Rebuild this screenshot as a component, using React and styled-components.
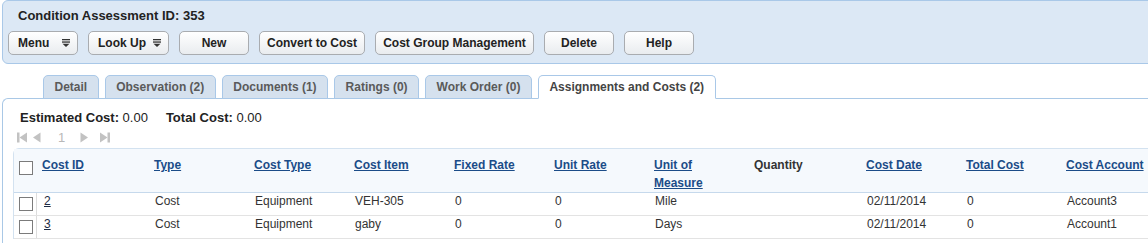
import styled, { createGlobalStyle } from "styled-components";

const GlobalStyle = createGlobalStyle`
  body {
    margin: 0;
    background: #ffffff;
    font-family: "Liberation Sans", Arial, sans-serif;
    font-size: 12px;
    color: #222;
    overflow: hidden;
  }
`;

const Page = styled.div`
  width: 1170px;
  padding-left: 2px;
`;

const Header = styled.div`
  background: #dce8f5;
  border: 1px solid #a9c8e8;
  border-radius: 6px;
  padding: 7px 0 8px 5px;
`;

const Title = styled.div`
  font-size: 13px;
  font-weight: bold;
  line-height: 16px;
  color: #222;
  padding-left: 10px;
  margin-bottom: 7px;
`;

const Toolbar = styled.div`
  display: flex;
  gap: 10px;
`;

const Button = styled.button`
  box-sizing: border-box;
  width: ${(p) => p.$w}px;
  height: 24px;
  padding: ${(p) => (p.$menu ? "0 7px 0 9px" : "0")};
  display: flex;
  align-items: center;
  gap: 6px;
  justify-content: ${(p) => (p.$menu ? "space-between" : "center")};
  background: linear-gradient(#ffffff, #e9ecef);
  border: 1px solid #a9acb0;
  border-radius: 5px;
  font-family: "Liberation Sans", Arial, sans-serif;
  font-size: 12px;
  font-weight: bold;
  color: #222;
`;

const TabBar = styled.div`
  display: flex;
  gap: 6px;
  margin: 11px 0 -1px 41px;
  position: relative;
`;

const Tab = styled.div`
  box-sizing: border-box;
  height: 24px;
  padding: 0 10.5px;
  display: flex;
  align-items: center;
  font-weight: bold;
  font-size: 12px;
  color: ${(p) => (p.$active ? "#444" : "#5a5a5a")};
  background: ${(p) => (p.$active ? "#ffffff" : "#d5e1ee")};
  border: 1px solid #a9c8e8;
  border-bottom-color: ${(p) => (p.$active ? "#ffffff" : "#a9c8e8")};
  border-radius: 5px 5px 0 0;
`;

const Panel = styled.div`
  border-top: 1px solid #a9c8e6;
  border-left: 1px solid #a9c8e6;
  border-top-left-radius: 6px;
  padding-top: 11px;
  height: 140px;
`;

const Summary = styled.div`
  display: flex;
  gap: 18px;
  padding-left: 17px;
  font-size: 13px;
  line-height: 15px;
  color: #222;
`;

const Label = styled.span`
  font-weight: bold;
`;

const Pager = styled.div`
  display: flex;
  align-items: center;
  height: 11px;
  margin: 7px 0 5px 14px;
`;

const PageNum = styled.span`
  font-size: 13px;
  color: #b8b8b8;
  margin: 0 15px 0 17px;
`;

const Grid = styled.div`
  margin-left: 10px;
  border-top: 1px solid #d3e2f0;
  border-left: 1px solid #d3e2f0;
  border-top-left-radius: 6px;
`;

const Row = styled.div`
  display: grid;
  grid-template-columns: 22px 112px 100px 100px 100px 100px 100px 100px 112px 100px 100px 1fr;
  background: ${(p) => (p.$head ? "#f5f9fd" : "#ffffff")};
  border-bottom: 1px solid ${(p) => (p.$head ? "#c6d9ec" : "#e3e3e3")};
  height: ${(p) => (p.$head ? "43px" : "22px")};
`;

const Cell = styled.div`
  box-sizing: border-box;
  padding: ${(p) => (p.$head ? "7px 6px 0" : "1px 6px 0 7px")};
  line-height: ${(p) => (p.$head ? "18px" : "14px")};
  color: #333;
  font-weight: ${(p) => (p.$head ? "bold" : "normal")};
  border-left: ${(p) => (p.$sep ? "1px solid #dddddd" : "none")};
  white-space: nowrap;
`;

const CheckCell = styled.div`
  box-sizing: border-box;
  padding: ${(p) => (p.$head ? "12px 0 0 5px" : "4px 0 0 5px")};
`;

const Check = styled.span`
  display: block;
  box-sizing: border-box;
  width: 14px;
  height: 14px;
  border: 1px solid #7b7b7b;
  background: #fff;
`;

const HeadLink = styled.a`
  color: #1b4c88;
  text-decoration: underline;
  white-space: ${(p) => (p.$wrap ? "normal" : "nowrap")};
  display: inline-block;
  width: ${(p) => (p.$wrap ? "60px" : "auto")};
`;

const IdLink = styled.a`
  color: #1d2b44;
  text-decoration: underline;
`;

const MenuIcon = () => (
  <svg width="8" height="8" viewBox="0 0 8 8">
    <rect x="0" y="0" width="8" height="1.3" fill="#333" />
    <rect x="0" y="2.4" width="8" height="1.3" fill="#333" />
    <polygon points="0.5,4.8 7.5,4.8 4,8" fill="#333" />
  </svg>
);

const PagerIcon = ({ kind }) => {
  const c = "#c2c2c2";
  if (kind === "first")
    return (
      <svg width="11" height="11" viewBox="0 0 11 11" style={{ marginRight: 5 }}>
        <rect x="0" y="0.5" width="2.5" height="10" fill={c} />
        <polygon points="2.5,5.5 10,0.5 10,10.5" fill={c} />
      </svg>
    );
  if (kind === "prev")
    return (
      <svg width="8" height="11" viewBox="0 0 8 11">
        <polygon points="0,5.5 7.5,0.5 7.5,10.5" fill={c} />
      </svg>
    );
  if (kind === "next")
    return (
      <svg width="8" height="11" viewBox="0 0 8 11" style={{ marginRight: 12 }}>
        <polygon points="0.5,0.5 8,5.5 0.5,10.5" fill={c} />
      </svg>
    );
  return (
    <svg width="11" height="11" viewBox="0 0 11 11">
      <polygon points="0,0.5 7.5,5.5 0,10.5" fill={c} />
      <rect x="7.5" y="0.5" width="2.5" height="10" fill={c} />
    </svg>
  );
};

const buttons = [
  { label: "Menu", w: 70, menu: true },
  { label: "Look Up", w: 81, menu: true },
  { label: "New", w: 70 },
  { label: "Convert to Cost", w: 106 },
  { label: "Cost Group Management", w: 159 },
  { label: "Delete", w: 70 },
  { label: "Help", w: 70 },
];

const tabs = [
  "Detail",
  "Observation (2)",
  "Documents (1)",
  "Ratings (0)",
  "Work Order (0)",
  "Assignments and Costs (2)",
];

const columns = [
  "Cost ID",
  "Type",
  "Cost Type",
  "Cost Item",
  "Fixed Rate",
  "Unit Rate",
  "Unit of Measure",
  "Quantity",
  "Cost Date",
  "Total Cost",
  "Cost Account",
];

const rows = [
  ["2", "Cost", "Equipment", "VEH-305", "0", "0", "Mile", "", "02/11/2014", "0", "Account3"],
  ["3", "Cost", "Equipment", "gaby", "0", "0", "Days", "", "02/11/2014", "0", "Account1"],
];

export default function App() {
  return (
    <Page>
      <GlobalStyle />
      <Header>
        <Title>Condition Assessment ID: 353</Title>
        <Toolbar>
          {buttons.map((b) => (
            <Button key={b.label} $w={b.w} $menu={b.menu}>
              {b.label}
              {b.menu && <MenuIcon />}
            </Button>
          ))}
        </Toolbar>
      </Header>

      <TabBar>
        {tabs.map((t, i) => (
          <Tab key={t} $active={i === tabs.length - 1}>
            {t}
          </Tab>
        ))}
      </TabBar>

      <Panel>
        <Summary>
          <span>
            <Label>Estimated Cost:</Label> 0.00
          </span>
          <span>
            <Label>Total Cost:</Label> 0.00
          </span>
        </Summary>

        <Pager>
          <PagerIcon kind="first" />
          <PagerIcon kind="prev" />
          <PageNum>1</PageNum>
          <PagerIcon kind="next" />
          <PagerIcon kind="last" />
        </Pager>

        <Grid>
          <Row $head>
            <CheckCell $head>
              <Check />
            </CheckCell>
            {columns.map((c) => (
              <Cell key={c} $head>
                {c === "Quantity" ? (
                  c
                ) : (
                  <HeadLink href="#" $wrap={c === "Unit of Measure"}>
                    {c}
                  </HeadLink>
                )}
              </Cell>
            ))}
          </Row>
          {rows.map((r) => (
            <Row key={r[0]}>
              <CheckCell>
                <Check />
              </CheckCell>
              {r.map((v, i) => (
                <Cell key={i} $sep={i === 0}>
                  {i === 0 ? <IdLink href="#">{v}</IdLink> : v}
                </Cell>
              ))}
            </Row>
          ))}
        </Grid>
      </Panel>
    </Page>
  );
}
